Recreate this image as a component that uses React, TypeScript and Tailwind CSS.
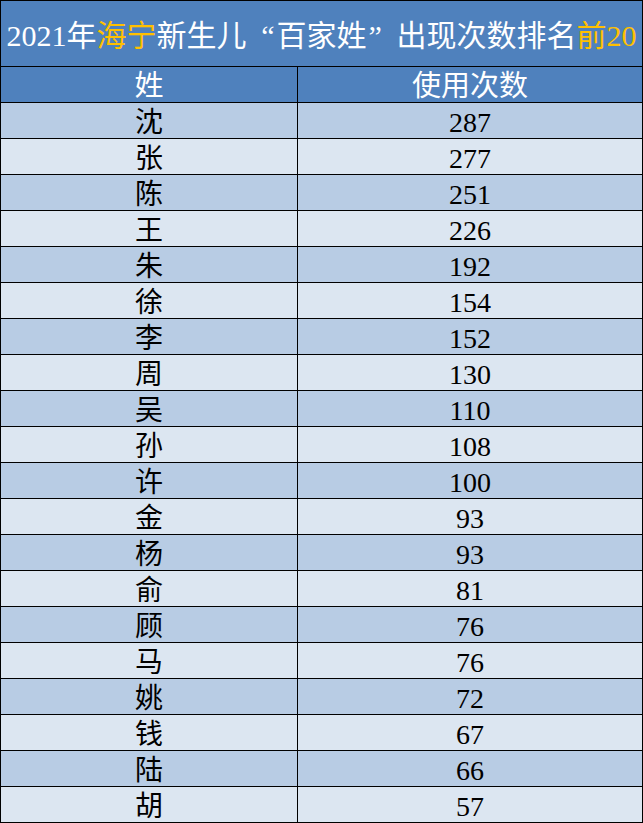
import React from "react";

const rows: [string, number][] = [
  ["沈", 287], ["张", 277], ["陈", 251], ["王", 226], ["朱", 192],
  ["徐", 154], ["李", 152], ["周", 130], ["吴", 110], ["孙", 108],
  ["许", 100], ["金", 93], ["杨", 93], ["俞", 81], ["顾", 76],
  ["马", 76], ["姚", 72], ["钱", 67], ["陆", 66], ["胡", 57],
];

const font = { fontFamily: '"Liberation Serif", "Noto Sans CJK SC", serif' };

export default function App() {
  return (
    <div className="w-[643px] h-[823px] bg-white overflow-hidden" style={font}>
      <div className="border-l border-t border-black w-[643px]">
        <div className="h-[66px] bg-[#4f81bd] border-r border-b border-black flex items-center justify-center pt-[5px] text-white text-[30px] leading-none whitespace-nowrap">
          <span>2021年</span>
          <span className="text-[#ffc000]">海宁</span>
          <span>新生儿</span>
          <span className="inline-block w-[30px] text-right pr-[2px]">“</span>
          <span>百家姓</span>
          <span className="inline-block w-[30px] text-left pl-[2px]">”</span>
          <span>出现次数排名</span>
          <span className="text-[#ffc000]">前20</span>
        </div>
        <div className="flex h-[36px] bg-[#4f81bd] text-white text-[29px] leading-none">
          <div className="w-[297px] border-r border-b border-black flex items-center justify-center pt-[3px]">姓</div>
          <div className="w-[345px] border-r border-b border-black flex items-center justify-center pt-[3px]">使用次数</div>
        </div>
        {rows.map(([n, c], i) => (
          <div
            key={i}
            className={`flex h-[36px] text-black text-[28px] leading-none ${i % 2 === 0 ? "bg-[#b8cce4]" : "bg-[#dce6f1]"}`}
          >
            <div className="w-[297px] border-r border-b border-black flex items-center justify-center pt-[5px]">{n}</div>
            <div className="w-[345px] border-r border-b border-black flex items-center justify-center pt-[5px]">{c}</div>
          </div>
        ))}
      </div>
    </div>
  );
}
